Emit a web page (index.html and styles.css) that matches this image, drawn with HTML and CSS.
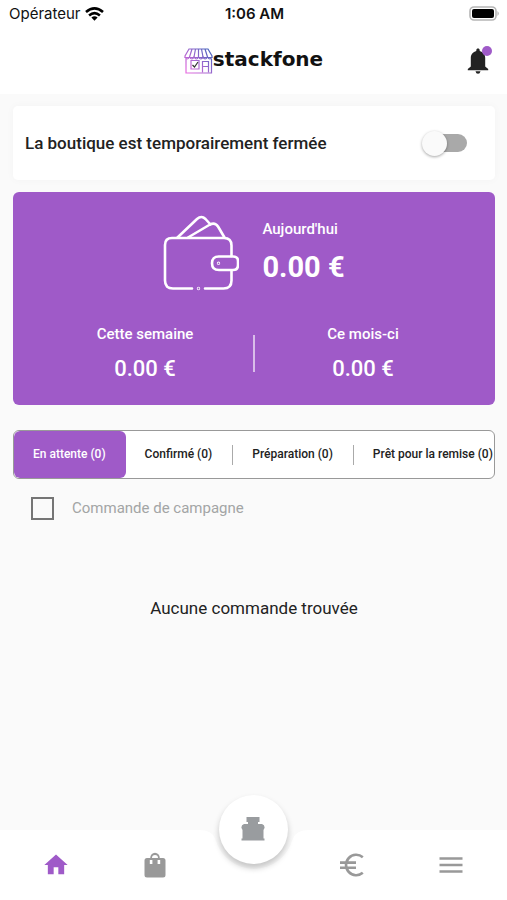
FILE: index.html
```html
<!DOCTYPE html>
<html lang="fr">
<head>
<meta charset="utf-8">
<meta name="viewport" content="width=device-width, initial-scale=1">
<title>stackfone</title>
<link rel="stylesheet" href="styles.css">
</head>
<body>
<div class="status">
  <div class="carrier">
    <span>Opérateur</span>
    <svg width="19" height="14" viewBox="0 0 19 14" aria-hidden="true"><g fill="none" stroke="#000" stroke-width="2.6"><path d="M1 5.1Q9.500-2.200 18 5.100"/><path d="M4.100 8.400Q9.500 3.800 14.900 8.400"/></g><path d="M6.400 10.600Q9.500 8 12.600 10.600L9.500 13.800Z"/></svg>
  </div>
  <time class="clock">1:06 AM</time>
  <svg class="battery" width="31" height="15" viewBox="0 0 31 15" aria-hidden="true"><rect x="1" y="1" width="26" height="13" rx="4" fill="#fff" stroke="#b5b5b5" stroke-width="1.600"/><rect x="3" y="3" width="22" height="9" rx="2"/><path d="M28.500 5Q31 7.500 28.500 10Z" fill="#aaa"/></svg>
</div>
<header class="header">
  <div class="brand">
    <svg width="29" height="26" viewBox="0 0 29 26" aria-hidden="true">
      <defs><linearGradient id="g" gradientUnits="userSpaceOnUse" x1="2" y1="25" x2="26" y2="2"><stop offset="0" stop-color="#e96be0"/><stop offset=".5" stop-color="#a368cf"/><stop offset="1" stop-color="#4664bd"/></linearGradient></defs>
      <g fill="none" stroke="url(#g)" stroke-width="1.200">
        <path d="M5 1H24L28 8V9.500H1V8ZM2 11V25H27.500V11M8 1 5.500 9M11.500 1 10 9M14.500 1V9M17.500 1 19 9M21 1 23.500 9"/>
        <path d="M1 9Q3 13 5.500 9Q8 13 10 9Q12.500 13 14.500 9Q17 13 19 9Q21 13 23.500 9Q26 13 28 9"/>
        <path d="M7 12.500H15V21H7ZM18.500 24.500V13.500H24.500V24.500M18.500 18.500H24.500"/>
      </g>
      <path d="M8.500 17 10.500 19 14 14" fill="none" stroke="#333" stroke-width="1.200"/>
    </svg>
    <span>stackfone</span>
  </div>
  <button class="bell" type="button" aria-label="Notifications">
    <svg width="22" height="26" viewBox="0 0 22 26" aria-hidden="true"><path fill="#222" d="M11 .5c1 0 1.700.7 1.700 1.700v.8C16 3.900 18.200 6.400 18.200 10v8.500l3 2.600v1.200H.8v-1.200l3-2.600V10C3.800 6.400 6 3.900 9.300 3v-.8C9.300 1.200 10 .5 11 .5ZM8.500 23.300h5Q13 25.800 11 25.800T8.500 23.300Z"/></svg>
    <i class="dot"></i>
  </button>
</header>
<main class="main">
  <section class="shop">
    <label for="open">La boutique est temporairement fermée</label>
    <input class="switch" id="open" type="checkbox" role="switch">
  </section>
  <section class="earnings">
    <div class="today">
      <svg width="76" height="76" viewBox="0 0 76 76" fill="none" stroke="#fff" stroke-width="2.600" stroke-linecap="round" stroke-linejoin="round" aria-hidden="true"><path d="M29 73.500H10Q2 73.500 2 65.500V30Q2 23 9 23H61Q68.500 23 68.500 30.500V41M68.500 56V65.500Q68.500 73.500 60.500 73.500H42"/><path d="M14.500 22.500 34 4Q38.500 0 42.500 4L47.500 9.500M25 22.500 47 9.500Q52 7 55 11.500L61.500 22.500"/><path d="M56 41.500H70Q75 41.500 75 46V50Q75 55 70 55H56Q49 55 49 48.200T56 41.500Z"/><circle cx="55.500" cy="48.300" r=".4"/><circle cx="35.500" cy="73.500" r=".4"/></svg>
      <div>
        <h2>Aujourd'hui</h2>
        <p class="total">0.00 €</p>
      </div>
    </div>
    <div class="periods">
      <div><h2>Cette semaine</h2><p>0.00 €</p></div>
      <span class="rule"></span>
      <div><h2>Ce mois-ci</h2><p>0.00 €</p></div>
    </div>
  </section>
  <div class="tabs" role="tablist">
    <button class="tab active" type="button" role="tab" aria-selected="true">En attente (0)</button>
    <button class="tab" type="button" role="tab">Confirmé (0)</button>
    <button class="tab split" type="button" role="tab">Préparation (0)</button>
    <button class="tab split" type="button" role="tab">Prêt pour la remise (0)</button>
  </div>
  <div class="campaign">
    <input id="campaign" type="checkbox">
    <label for="campaign">Commande de campagne</label>
  </div>
  <p class="empty">Aucune commande trouvée</p>
</main>
<nav class="nav">
  <div class="nav-back"><i></i><svg width="110" height="70" viewBox="0 0 110 70" aria-hidden="true"><path fill="#fff" d="M0 0Q13 0 16.300 9A40 40 0 0 0 93.700 9Q97 0 110 0V70H0Z"/></svg><i></i></div>
  <a href="#accueil" aria-label="Accueil"><svg width="28" height="28" viewBox="0 0 24 24" fill="#9f5ac8"><path d="M10 20v-6h4v6h5v-8h3L12 3 2 12h3v8z"/></svg></a>
  <a href="#commandes" aria-label="Commandes"><svg width="28" height="28" viewBox="0 0 28 28"><path fill="#999" fill-rule="evenodd" d="M6 7h3.200a4.800 5.200 0 0 1 9.600 0H22q2.500 0 2.500 2.500V24q0 2.500-2.500 2.500H6Q3.500 26.500 3.500 24V9.500Q3.500 7 6 7Zm5 0h6a3 3 0 0 0-6 0ZM8.800 9v4h2.600V9Zm7.800 0v4h2.600V9Z"/></svg></a>
  <a class="fab" href="#caisse" aria-label="Caisse"><svg width="24" height="24" viewBox="0 0 24 24"><path fill="#999c9f" d="M5.500 0H18.500V5H17V7H21Q24 8 23.500 11L22.500 13V21.500H23.500V23.500H.5V21.500H1.500V13L.5 11Q0 8 3 7H7V5H5.500Z"/></svg></a>
  <a href="#revenus" aria-label="Revenus"><svg width="28" height="28" viewBox="0 0 28 28" fill="none" stroke="#999" stroke-width="2.600"><path d="M24.800 6.200A10.200 10.200 0 1 0 24.800 21.800M2 11.600H18M2 16.800H18"/></svg></a>
  <a href="#menu" aria-label="Menu"><svg width="28" height="28" viewBox="0 0 28 28" stroke="#999" stroke-width="2.400"><path d="M2.500 7.500H25.500M2.500 14H25.500M2.500 20.500H25.500"/></svg></a>
</nav>
</body>
</html>
```
FILE: styles.css
```css
* { box-sizing: border-box; }
body {
  margin: 0;
  min-height: 100vh;
  display: flex;
  flex-direction: column;
  background: #fafafa;
  color: #222;
  font-family: Roboto, "Liberation Sans", sans-serif;
}
h2, p { margin: 0; }
button { font: inherit; border: 0; background: none; padding: 0; }
svg { display: block; }

.status {
  display: grid;
  grid-template-columns: 1fr auto 1fr;
  align-items: center;
  height: 27px;
  padding: 0 7px 0 9px;
  background: #fff;
  color: #111;
  font-family: Inter, sans-serif;
  font-size: 15px;
}
.carrier { display: flex; align-items: center; gap: 4px; }
.clock { font-weight: 600; }
.battery { justify-self: end; }

.header {
  display: grid;
  grid-template-columns: 1fr auto 1fr;
  align-items: center;
  height: 67px;
  padding: 0 18px;
  background: #fff;
}
.brand {
  grid-column: 2;
  display: flex;
  align-items: center;
  font: bold 20px/24px "DejaVu Sans", sans-serif;
  color: #111;
}
.brand span { padding-bottom: 3px; }
.bell { justify-self: end; position: relative; }
.dot {
  position: absolute;
  top: -2px;
  right: -3px;
  width: 10px;
  height: 10px;
  border-radius: 50%;
  background: #9f5ac8;
}

.main { flex: 1; padding: 12px 12px 0 13px; }
.shop {
  display: flex;
  align-items: center;
  justify-content: space-between;
  height: 74px;
  padding: 0 28px 0 12px;
  border-radius: 5px;
  background: #fff;
  box-shadow: 0 0 8px rgba(0, 0, 0, 0.03);
  font-size: 17px;
  font-weight: 500;
}
.switch {
  appearance: none;
  display: flex;
  align-items: center;
  width: 37px;
  height: 18px;
  margin: 0;
  border-radius: 9px;
  background: #a9a9a9;
}
.switch::before {
  content: "";
  flex: none;
  width: 25px;
  height: 25px;
  margin-left: -8px;
  border-radius: 50%;
  background: #fafafa;
  box-shadow: 0 1px 3px rgba(0, 0, 0, 0.35);
}

.earnings {
  margin-top: 12px;
  padding: 23px 0;
  height: 213px;
  border-radius: 6px;
  background: #9f5ac8;
  color: #fff;
}
.earnings h2 { font-size: 15px; line-height: 20px; font-weight: 500; }
.today { display: flex; justify-content: center; gap: 23px; }
.total { margin-top: 12px; font-size: 29px; line-height: 32px; font-weight: 700; }
.today h2 { margin-top: 4px; }
.periods {
  display: grid;
  grid-template-columns: 1fr 2px 1fr;
  align-items: center;
  margin-top: 33px;
  padding: 0 24px;
  text-align: center;
}
.periods p { margin-top: 11px; font-size: 22px; line-height: 28px; font-weight: 500; }
.rule { height: 37px; background: #d9bde9; }

.tabs {
  display: flex;
  align-items: center;
  height: 49px;
  margin-top: 25px;
  border: 1px solid #999;
  border-radius: 6px;
  background: #fff;
  overflow: hidden;
}
.tab {
  flex: none;
  padding: 0 20px 2px 19px;
  font-size: 12px;
  line-height: 18px;
  font-weight: 500;
  color: #222;
  white-space: nowrap;
}
.tab.active {
  align-self: stretch;
  border-radius: 6px;
  background: #9f5ac8;
  color: #fff;
}
.split { border-left: 1px solid #aaa; }

.campaign {
  display: flex;
  align-items: center;
  gap: 18px;
  margin-top: 18px;
  padding-left: 18px;
  font-size: 15px;
  line-height: 23px;
  color: #a3a5a5;
}
.campaign input {
  appearance: none;
  width: 23px;
  height: 23px;
  margin: 0;
  border: 2px solid #757575;
}
.empty {
  margin-top: 76px;
  text-align: center;
  font-size: 17px;
  line-height: 24px;
}

.nav {
  position: relative;
  display: grid;
  grid-template-columns: repeat(5, 1fr);
  align-items: center;
  justify-items: center;
  height: 70px;
  padding: 0 7px;
}
.nav-back { position: absolute; inset: 0; display: flex; }
.nav-back i { flex: 1; background: #fff; }
.nav a { position: relative; }
.nav .fab {
  display: grid;
  place-items: center;
  width: 69px;
  height: 69px;
  margin-top: -72px;
  border-radius: 50%;
  background: #fff;
  box-shadow: 0 4px 6px rgba(0, 0, 0, 0.22);
}
```
